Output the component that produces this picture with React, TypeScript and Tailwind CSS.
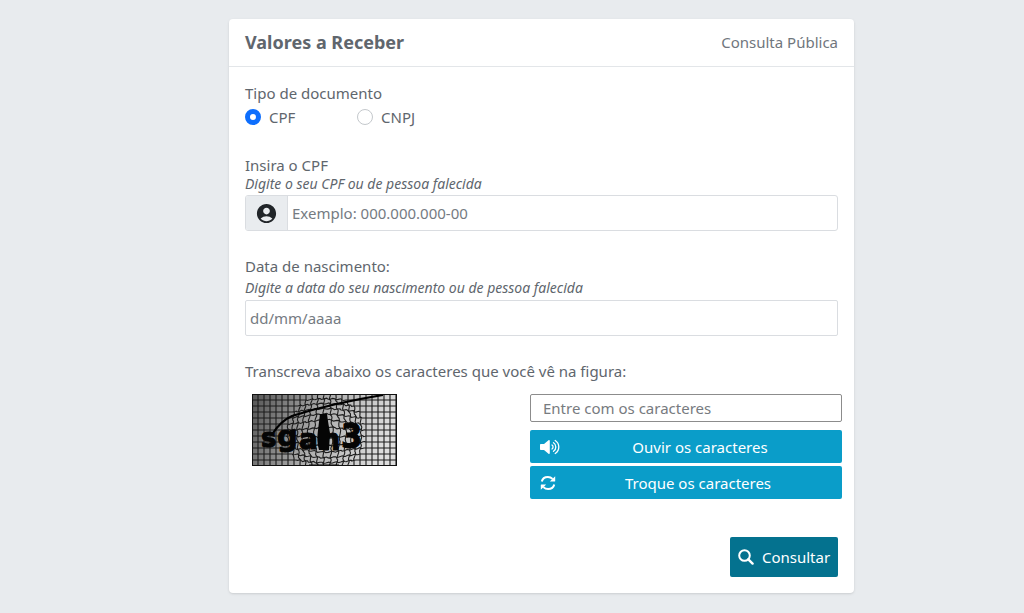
import React, { useState } from "react";
import { MdAccountCircle } from "react-icons/md";

const WIDTH = 145;
const HEIGHT = 72;

// pushes a grid point away from the centre of the bulge
const warp = (x: number, y: number) => {
  const dx = x - 74;
  const dy = y - 40;
  const r = Math.hypot(dx, dy);
  const radius = 39;
  if (r >= radius || r === 0) return `${x},${y}`;
  const k = Math.pow(r / radius, -0.25);
  const wave = Math.sin(x * 0.9 + y * 0.7) * 0.7;
  return `${(74 + dx * k + wave).toFixed(1)},${(40 + dy * k - wave).toFixed(1)}`;
};

const gridLines = () => {
  const lines: string[] = [];
  for (let x = 6; x < WIDTH; x += 6) {
    const points: string[] = [];
    for (let y = 0; y <= HEIGHT; y += 2) points.push(warp(x, y));
    lines.push(points.join(" "));
  }
  for (let y = 6; y < HEIGHT; y += 6) {
    const points: string[] = [];
    for (let x = 0; x <= WIDTH; x += 2) points.push(warp(x, y));
    lines.push(points.join(" "));
  }
  return lines;
};

const Captcha: React.FC = () => (
  <svg
    width={WIDTH}
    height={HEIGHT}
    viewBox={`0 0 ${WIDTH} ${HEIGHT}`}
    role="img"
    aria-label="Captcha"
    className="ml-[7px] shrink-0"
  >
    <defs>
      <linearGradient id="shade" x1="0" y1="0.1" x2="1" y2="0.3">
        <stop offset="0" stopColor="#585858" />
        <stop offset="0.5" stopColor="#adadad" />
        <stop offset="1" stopColor="#dedede" />
      </linearGradient>
    </defs>
    <rect width={WIDTH} height={HEIGHT} fill="url(#shade)" />
    <g fill="none" stroke="#1c1c1c" strokeWidth="1.1">
      {gridLines().map((points, i) => (
        <polyline key={i} points={points} />
      ))}
    </g>
    <path
      d="M21 39C25 33 31 26 40 22C62 15 94 7 131 1"
      fill="none"
      stroke="#000"
      strokeWidth="2.2"
    />
    <g
      fill="#050505"
      stroke="#050505"
      strokeWidth="1"
      fontFamily="'DejaVu Sans', sans-serif"
      fontWeight="700"
    >
      <text x="9" y="53" fontSize="26">s</text>
      <text x="25" y="52" fontSize="29">g</text>
      <text x="47" y="55" fontSize="28">a</text>
      <g fontFamily="'DejaVu Sans Condensed', 'DejaVu Sans', sans-serif">
        <text x="69" y="56" fontSize="30">h</text>
        <text x="89" y="54" fontSize="34">3</text>
      </g>
    </g>
    <path
      d="M68 20L75 20C76 28 77 33 78 39L77 56L67 56C65 50 65 43 66 36Z"
      fill="#050505"
    />
    <path d="M57 71.5H87" stroke="#000" strokeWidth="2" />
    <rect
      x="0.5"
      y="0.5"
      width={WIDTH - 1}
      height={HEIGHT - 1}
      fill="none"
      stroke="#111"
    />
  </svg>
);

const SpeakerIcon: React.FC = () => (
  <svg width="20" height="16" viewBox="0 0 20 16" aria-hidden="true">
    <path
      d="M1 5H4L8.5 1.2C9 0.8 9.8 1.1 9.8 1.8V14.2C9.8 14.9 9 15.2 8.5 14.8L4 11H1C0.4 11 0 10.6 0 10V6C0 5.4 0.4 5 1 5Z"
      fill="currentColor"
    />
    <path
      d="M12 6C13.4 6.9 13.4 9.1 12 10M13.5 3.7C16.6 5.6 16.6 10.4 13.5 12.3M15.2 1.5C20 4.7 20 11.3 15.2 14.5"
      fill="none"
      stroke="currentColor"
      strokeWidth="1.3"
      strokeLinecap="round"
    />
  </svg>
);

const RefreshIcon: React.FC = () => (
  <svg width="16" height="16" viewBox="0 0 16 16" aria-hidden="true">
    <path
      d="M1.8 6.5C2.4 3.7 5 1.9 7.9 1.9C9.8 1.9 11.4 2.7 12.6 3.9M14.2 9.5C13.6 12.3 11 14.1 8.1 14.1C6.2 14.1 4.6 13.3 3.4 12.1"
      fill="none"
      stroke="currentColor"
      strokeWidth="2"
    />
    <path
      d="M15.2 1.2V6C15.2 6.4 15 6.6 14.6 6.6H9.8L11.6 4.8ZM0.8 14.8V10C0.8 9.6 1 9.4 1.4 9.4H6.2L4.4 11.2Z"
      fill="currentColor"
    />
  </svg>
);

const SearchIcon: React.FC = () => (
  <svg width="16" height="16" viewBox="0 0 16 16" aria-hidden="true">
    <g fill="none" stroke="currentColor" strokeWidth="2">
      <circle cx="6.5" cy="6.5" r="5.3" />
      <path d="M10.3 10.3L14.6 14.6" strokeWidth="2.4" strokeLinecap="round" />
    </g>
  </svg>
);

const App: React.FC = () => {
  const [docType, setDocType] = useState("CPF");

  return (
    <div className="min-h-screen bg-[#e8ebee] pl-[59px] pt-[19px] pb-5 font-['Noto_Sans',sans-serif] text-[15px] leading-6 text-[#60666d]">
      <main className="mx-auto w-full max-w-[625px] rounded bg-white shadow-sm">
        <header className="flex h-12 items-center justify-between border-b border-[#e3e6e9] px-4 pb-0.5">
          <h1 className="text-lg leading-6 font-bold">Valores a Receber</h1>
          <span className="text-[#70767d]">Consulta Pública</span>
        </header>

        <form
          onSubmit={(e) => e.preventDefault()}
          className="px-4 pt-3.5 pb-4"
        >
          <fieldset>
            <legend>Tipo de documento</legend>
            <div className="flex">
              {["CPF", "CNPJ"].map((type) => (
                <label key={type} className="flex w-28 items-center gap-2">
                  <input
                    type="radio"
                    name="docType"
                    value={type}
                    checked={docType === type}
                    onChange={() => setDocType(type)}
                    className="size-4 appearance-none rounded-full border border-[#c4c8cc] bg-white checked:border-[5px] checked:border-[#0d6efd]"
                  />
                  {type}
                </label>
              ))}
            </div>
          </fieldset>

          <div className="mt-6">
            <label htmlFor="cpf" className="block">
              Insira o {docType}
            </label>
            <p className="text-sm leading-[14px] italic">
              Digite o seu CPF ou de pessoa falecida
            </p>
            <div className="mt-1 flex h-9 overflow-hidden rounded-[3px] border border-[#dadde1]">
              <span className="flex w-[42px] items-center justify-center border-r border-[#dadde1] bg-[#e9ecef] text-[#212529]">
                <MdAccountCircle size={23} />
              </span>
              <input
                id="cpf"
                type="text"
                placeholder="Exemplo: 000.000.000-00"
                className="min-w-0 flex-1 px-1 outline-none placeholder:text-[#757b82]"
              />
            </div>
          </div>

          <div className="mt-[23px]">
            <label htmlFor="birth" className="block">
              Data de nascimento:
            </label>
            <p className="text-sm leading-5 italic">
              Digite a data do seu nascimento ou de pessoa falecida
            </p>
            <input
              id="birth"
              type="text"
              placeholder="dd/mm/aaaa"
              className="mt-0.5 block h-9 w-full rounded-xs border border-[#dadde1] px-1 outline-none placeholder:text-[#757b82]"
            />
          </div>

          <label htmlFor="captcha" className="mt-[23px] block">
            Transcreva abaixo os caracteres que você vê na figura:
          </label>
          <div className="-mr-1 mt-[11px] flex items-start justify-between">
            <Captcha />
            <div className="w-[312px]">
              <input
                id="captcha"
                type="text"
                placeholder="Entre com os caracteres"
                className="block h-7 w-full rounded-xs border border-[#8c8c8c] px-3 outline-none placeholder:text-[#777b80]"
              />
              <button
                type="button"
                className="mt-2 flex h-[33px] w-full items-center rounded-xs bg-[#0a9dc9] px-2.5 text-white"
              >
                <SpeakerIcon />
                <span className="ml-2 flex-1">Ouvir os caracteres</span>
              </button>
              <button
                type="button"
                className="mt-[3px] flex h-[33px] w-full items-center rounded-xs bg-[#0a9dc9] px-2.5 text-white"
              >
                <RefreshIcon />
                <span className="ml-2 flex-1">Troque os caracteres</span>
              </button>
            </div>
          </div>

          <div className="mt-[38px] flex justify-end">
            <button
              type="submit"
              className="flex h-10 w-[108px] items-center justify-center gap-2 rounded-xs bg-[#04728f] text-white"
            >
              <SearchIcon />
              Consultar
            </button>
          </div>
        </form>
      </main>
    </div>
  );
};

export default App;
